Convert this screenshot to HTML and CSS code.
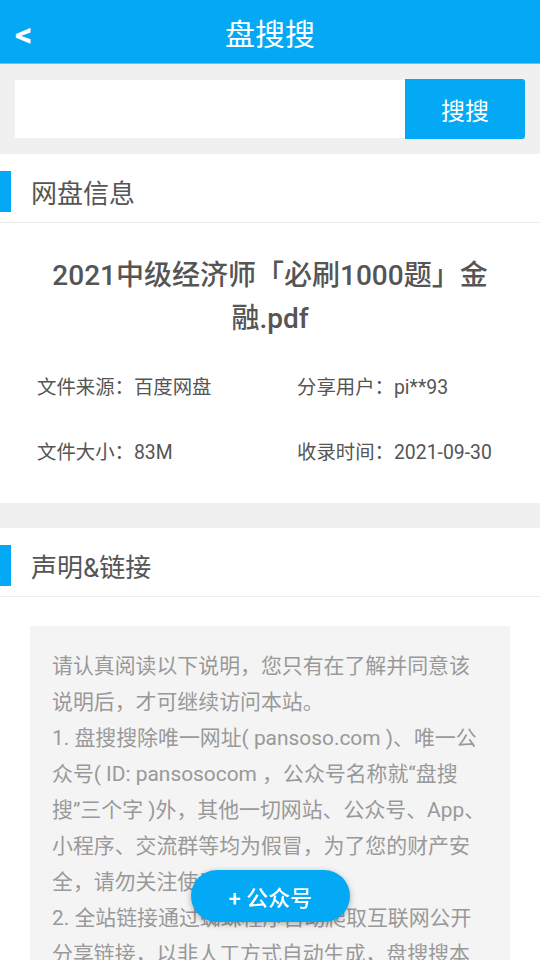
FILE: index.html
```html
<!DOCTYPE html>
<html lang="zh-CN">
<head>
    <meta charset="UTF-8">
    <meta name="viewport" content="width=device-width, initial-scale=1.0">
    <title>盘搜搜</title>
    <link rel="stylesheet" href="styles.css">
</head>
<body>

<header class="topbar">
    <a class="back" href="#">&lt;</a>
    <h1>盘搜搜</h1>
</header>

<form class="search" onsubmit="return false">
    <input type="text" class="search-input">
    <button type="submit" class="search-btn">搜搜</button>
</form>

<section class="panel">
    <div class="panel-head">
        <span class="bar"></span>
        <h2>网盘信息</h2>
    </div>
    <div class="info">
        <h3 class="file-title">2021中级经济师「必刷1000题」金融.pdf</h3>
        <div class="meta">
            <div>文件来源：百度网盘</div>
            <div>分享用户：pi**93</div>
            <div>文件大小：83M</div>
            <div>收录时间：2021-09-30</div>
        </div>
    </div>
</section>

<section class="panel">
    <div class="panel-head">
        <span class="bar"></span>
        <h2>声明&amp;链接</h2>
    </div>
    <div class="notice">
        <p>请认真阅读以下说明，您只有在了解并同意该说明后，才可继续访问本站。</p>
        <p>1. 盘搜搜除唯一网址( pansoso.com )、唯一公众号( ID: pansosocom ，公众号名称就“盘搜<br>搜”三个字 )外，其他一切网站、公众号、App、小程序、交流群等均为假冒，为了您的财产安全，请勿关注使用。</p>
        <p>2. 全站链接通过蜘蛛程序自动爬取互联网公开分享链接，以非人工方式自动生成，盘搜搜本身不储存、不复制、不传播任何网盘文件。</p>
    </div>
</section>

<a class="follow" href="#">+ 公众号</a>

</body>
</html>
```

FILE: styles.css
```css
body {
    margin: 0;
    padding: 0;
    background: #f0f0f0;
    font-family: Roboto, "Noto Sans CJK SC", sans-serif;
    color: #555;
}

.topbar {
    position: relative;
    height: 63px;
    background: #03a9f4;
    border-bottom: 1px solid #5cc6f8;
    display: flex;
    align-items: center;
    justify-content: center;
}

.topbar h1 {
    margin: 0;
    font-size: 30px;
    font-weight: normal;
    color: white;
}

/* back arrow sits over the bar */
.back {
    position: absolute;
    left: 15px;
    top: 17px;
    font-size: 34px;
    line-height: 34px;
    font-weight: bold;
    color: white;
    text-decoration: none;
}

.search {
    display: flex;
    align-items: center;
    padding: 15px;
}

.search-input {
    flex: 1;
    height: 58px;
    border: none;
    outline: none;
    background: white;
    padding: 0 10px;
    font-size: 20px;
}

.search-btn {
    width: 120px;
    height: 60px;
    border: none;
    border-radius: 0 3px 3px 0;
    background: #03a9f4;
    color: white;
    font-size: 24px;
    font-family: Roboto, "Noto Sans CJK SC", sans-serif;
}

.panel {
    background: white;
    margin-bottom: 25px;
}

.panel-head {
    display: flex;
    align-items: center;
    padding: 17px 0 10px;
    border-bottom: 1px solid #ececec;
}

.panel-head .bar {
    width: 11px;
    height: 41px;
    background: #03a9f4;
    margin-right: 20px;
}

.panel-head h2 {
    margin: 0;
    font-size: 26px;
    font-weight: normal;
    color: #555;
}

.info {
    padding: 31px 0 20px;
}

.file-title {
    margin: 0 0 13px;
    padding: 0 38px;
    text-align: center;
    font-size: 28px;
    font-weight: 500;
    line-height: 43px;
    color: #555;
}

.meta {
    display: grid;
    grid-template-columns: 260px 1fr;
    grid-auto-rows: 65px;
    align-items: center;
    padding-left: 37px;
    font-size: 19.4px;
}

.notice {
    margin: 29px 30px 0;
    padding: 22px;
    background: #f4f4f4;
    color: #999;
    font-size: 20.9px;
    line-height: 36px;
}

.notice p {
    margin: 0;
}

.follow {
    position: fixed;
    left: 191px;
    bottom: 38px;
    width: 159px;
    height: 52px;
    border-radius: 26px;
    background: #03a9f4;
    box-shadow: 0 2px 6px rgba(0, 0, 0, 0.3);
    color: white;
    font-size: 22px;
    font-weight: 500;
    text-decoration: none;
    display: flex;
    align-items: center;
    justify-content: center;
}
```
